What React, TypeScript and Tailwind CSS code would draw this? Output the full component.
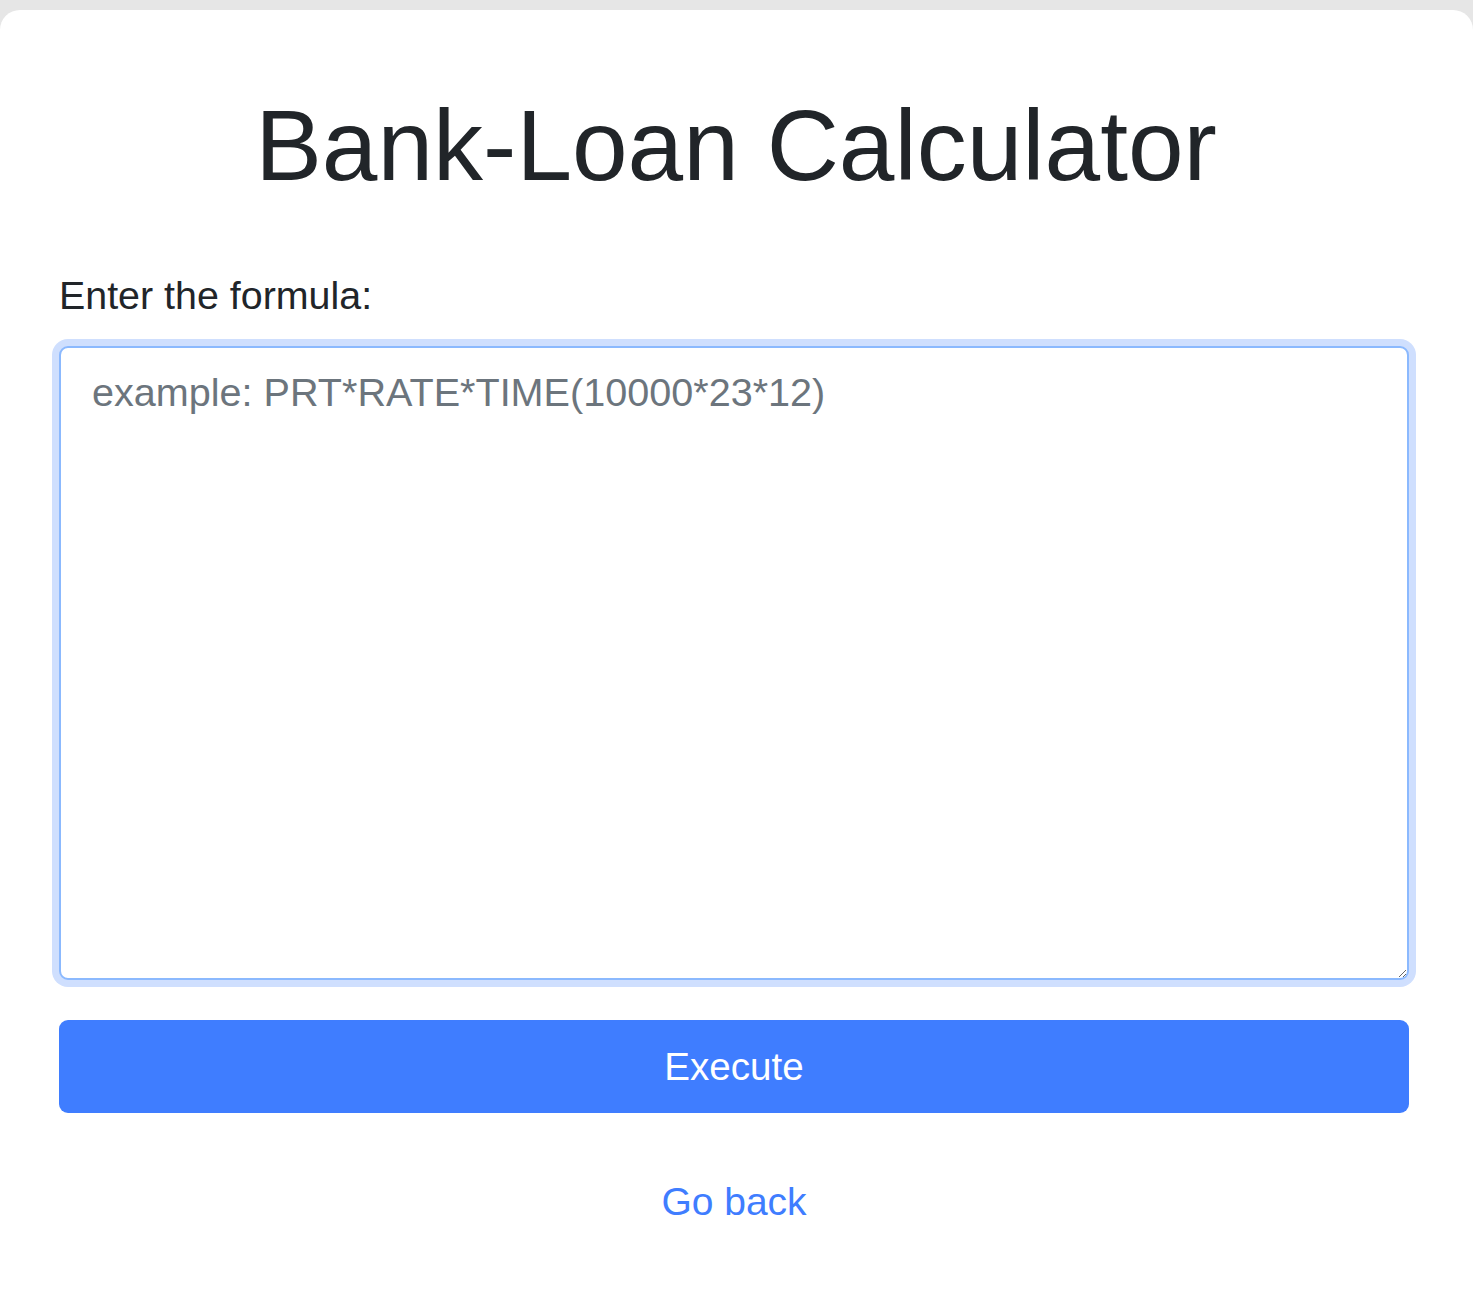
export default function App() {
  return (
    <main className="min-h-screen bg-[#e6e6e6] pt-[10px] font-['Liberation_Sans',Arial,sans-serif] text-[#212529]">
      {/* Card */}
      <div className="min-h-[1296px] bg-white rounded-t-[20px] pl-[59px] pr-[64px] pt-[75px] pb-[40px]">
        <h1 className="text-center text-[100px] leading-[1.2] font-normal mb-[61px] -mr-[4px]">
          Bank-Loan Calculator
        </h1>

        <label htmlFor="formula" className="block text-[39.4px] leading-[1.5] mb-[21px]">
          Enter the formula:
        </label>
        <textarea
          id="formula"
          placeholder="example: PRT*RATE*TIME(10000*23*12)"
          className="block w-full h-[634px] border-2 border-[#8bb9fe] rounded-[9px] shadow-[0_0_0_7px_#cfdffe] outline-none px-[31px] pt-[15px] text-[39.6px] leading-[1.5] text-[#212529] placeholder:text-[#6c757d] bg-white"
        />

        <button
          type="button"
          className="block w-full h-[93px] mt-[40px] bg-[#3f7dff] rounded-[9px] text-white text-[38.6px] leading-[1.5]"
        >
          Execute
        </button>

        <div className="text-center mt-[60px]">
          <a href="#" className="text-[#3f7dff] text-[39px] leading-[1.5]">
            Go back
          </a>
        </div>
      </div>
    </main>
  )
}
